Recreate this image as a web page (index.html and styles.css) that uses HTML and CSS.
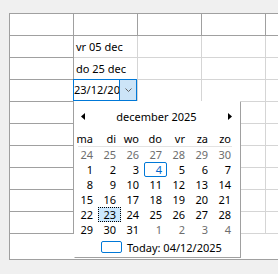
FILE: index.html
```html
<!DOCTYPE html>
<html lang="nl">
<head>
    <meta charset="UTF-8">
    <title>Datum kolom</title>
    <link rel="stylesheet" href="styles.css">
</head>
<body>

    <!-- Data grid -->
    <div class="grid-view">
        <div class="row">
            <div class="head-cell"></div>
            <div class="head-cell"></div>
            <div class="head-cell"></div>
            <div class="head-cell"></div>
            <div class="head-cell"></div>
        </div>
        <div class="row">
            <div class="row-head"></div>
            <div class="cell">vr 05 dec</div>
            <div class="cell"></div>
            <div class="cell"></div>
            <div class="cell"></div>
        </div>
        <div class="row">
            <div class="row-head"></div>
            <div class="cell">do 25 dec</div>
            <div class="cell"></div>
            <div class="cell"></div>
            <div class="cell"></div>
        </div>
        <div class="row">
            <div class="row-head"></div>
            <div class="cell editing">
                <div class="date-editor">
                    <span class="date-text">23/12/2025</span>
                    <span class="drop-button">
                        <svg width="7" height="4" viewBox="0 0 7 4"><polyline points="0.5,0.5 3.5,3.5 6.5,0.5" fill="none" stroke="#606060" stroke-width="1"/></svg>
                    </span>
                </div>
            </div>
            <div class="cell"></div>
            <div class="cell"></div>
            <div class="cell"></div>
        </div>
        <div class="row">
            <div class="row-head"></div>
            <div class="cell"></div><div class="cell"></div><div class="cell"></div><div class="cell"></div>
        </div>
        <div class="row">
            <div class="row-head"></div>
            <div class="cell"></div><div class="cell"></div><div class="cell"></div><div class="cell"></div>
        </div>
        <div class="row">
            <div class="row-head"></div>
            <div class="cell"></div><div class="cell"></div><div class="cell"></div><div class="cell"></div>
        </div>
        <div class="row">
            <div class="row-head"></div>
            <div class="cell"></div><div class="cell"></div><div class="cell"></div><div class="cell"></div>
        </div>
        <div class="row">
            <div class="row-head"></div>
            <div class="cell"></div><div class="cell"></div><div class="cell"></div><div class="cell"></div>
        </div>
        <div class="row">
            <div class="row-head"></div>
            <div class="cell"></div><div class="cell"></div><div class="cell"></div><div class="cell"></div>
        </div>
    </div>

    <!-- Calendar dropdown -->
    <div class="calendar-popup">
        <div class="cal-head">
            <svg width="4" height="7" viewBox="0 0 4 7"><polygon points="4,0 0,3.5 4,7" fill="#000"/></svg>
            <span class="cal-title">december 2025</span>
            <svg width="4" height="7" viewBox="0 0 4 7"><polygon points="0,0 4,3.5 0,7" fill="#000"/></svg>
        </div>
        <div class="cal-days">
            <span>ma</span><span>di</span><span>wo</span><span>do</span><span>vr</span><span>za</span><span>zo</span>
        </div>
        <div class="cal-rule"></div>
        <div class="cal-dates">
            <span class="other">24</span><span class="other">25</span><span class="other">26</span><span class="other">27</span><span class="other">28</span><span class="other">29</span><span class="other">30</span>
            <span>1</span><span>2</span><span>3</span><span class="today">4</span><span>5</span><span>6</span><span>7</span>
            <span>8</span><span>9</span><span>10</span><span>11</span><span>12</span><span>13</span><span>14</span>
            <span>15</span><span>16</span><span>17</span><span>18</span><span>19</span><span>20</span><span>21</span>
            <span>22</span><span class="selected">23</span><span>24</span><span>25</span><span>26</span><span>27</span><span>28</span>
            <span>29</span><span>30</span><span>31</span><span class="other">1</span><span class="other">2</span><span class="other">3</span><span class="other">4</span>
        </div>
        <div class="cal-foot">
            <span class="today-mark"></span>
            <span>Today: 04/12/2025</span>
        </div>
    </div>

</body>
</html>
```

FILE: styles.css
```css
/* Reset */
* {
    margin: 0;
    padding: 0;
    box-sizing: border-box;
}

body {
    background-color: #f0f0f0;
    font-family: "Noto Sans", "Open Sans", sans-serif;
    font-size: 11px;
    color: #000;
    overflow: hidden;
    position: relative;
    height: 274px;
}

/* Grid */
.grid-view {
    margin: 13px 0 0 9px;
    width: 400px;
    height: 247px;
    background-color: #fff;
    border: 1px solid #a0a0a0;
}

.row {
    display: grid;
    grid-template-columns: repeat(5, 64px);
    height: 22px;
}

.head-cell,
.row-head {
    border-right: 1px solid #a0a0a0;
    border-bottom: 1px solid #a0a0a0;
}

.cell {
    display: flex;
    align-items: center;
    padding-left: 2px;
    white-space: nowrap;
    border-right: 1px solid #d5d5d5;
    border-bottom: 1px solid #d5d5d5;
}

/* Cell in edit mode */
.cell.editing {
    position: relative;
    padding-left: 0;
}

.date-editor {
    position: absolute;
    top: -1px;
    left: -1px;
    right: 0;
    bottom: 0;
    display: flex;
    background-color: #fff;
    border: 1px solid #0078d7;
}

.date-text {
    flex: 1;
    overflow: hidden;
    white-space: nowrap;
    line-height: 20px;
}

.drop-button {
    width: 17px;
    display: flex;
    align-items: center;
    justify-content: center;
    background-color: #cce4f7;
    border-left: 1px solid #0078d7;
}

/* Calendar popup */
.calendar-popup {
    position: absolute;
    left: 74px;
    top: 101px;
    width: 167px;
    height: 157px;
    background-color: #fff;
    border: 1px solid #fff;
    border-right-color: #a0a0a0;
    border-bottom-color: #a0a0a0;
}

.cal-head {
    height: 29px;
    display: flex;
    align-items: center;
    justify-content: space-between;
    padding: 0 8px 0 6px;
}

.cal-days,
.cal-dates {
    display: grid;
    grid-template-columns: repeat(7, 23px);
}

.cal-days span,
.cal-dates span {
    text-align: right;
    padding-right: 5px;
    line-height: 15px;
    height: 15px;
}

.cal-days {
    height: 15px;
}

.cal-rule {
    height: 1px;
    width: 154px;
    margin-left: 3px;
    background-color: #e3e3e3;
}

.cal-dates .other {
    color: #6d6d6d;
}

.cal-dates .today {
    color: #0066cc;
    border: 1px solid #0078d7;
    border-radius: 2px;
    padding-right: 4px;
    line-height: 13px;
}

.cal-dates .selected {
    background-color: #cce8ff;
    border: 1px dotted #000;
    padding-right: 4px;
    line-height: 13px;
}

.cal-foot {
    height: 20px;
    display: flex;
    align-items: center;
    gap: 5px;
    padding-left: 26px;
}

.today-mark {
    width: 21px;
    height: 12px;
    border: 1px solid #0078d7;
    border-radius: 2px;
}
```
